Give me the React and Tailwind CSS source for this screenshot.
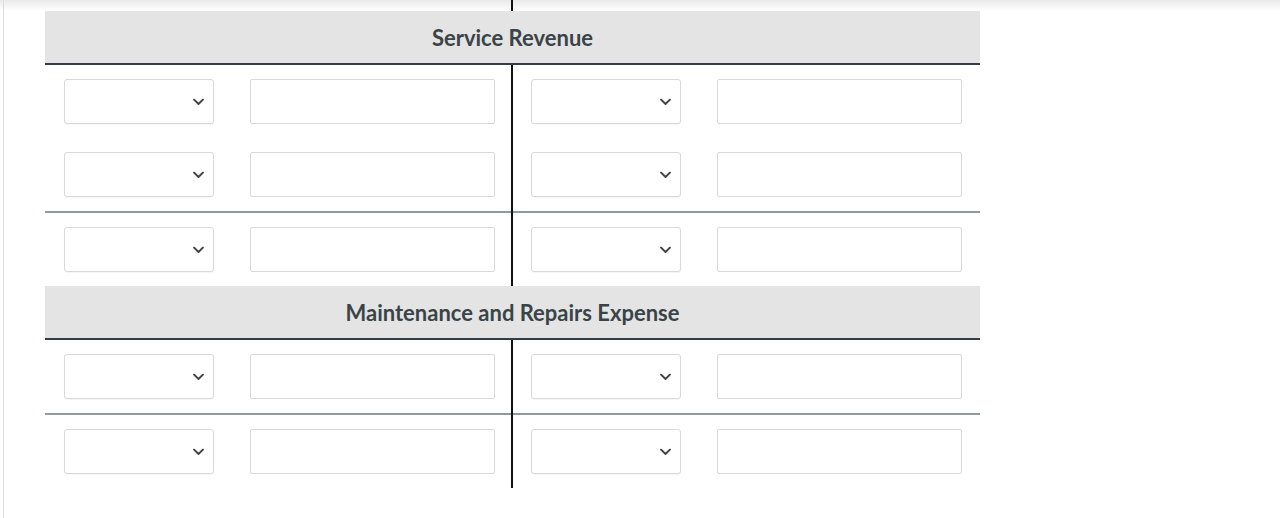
import React from "react";

function Select() {
  return (
    <div className="relative w-[150px] h-[45px] shrink-0 rounded-[3px] border border-[#d9d9d9] bg-white shadow-[0_1px_1px_rgba(0,0,0,0.04)]">
      <svg
        className="absolute right-[9px] top-1/2 -translate-y-1/2"
        width="11"
        height="7"
        viewBox="0 0 11 7"
        fill="none"
      >
        <polyline points="1,1 5.5,5.5 10,1" stroke="#444" strokeWidth="1.8" strokeLinecap="round" strokeLinejoin="round" />
      </svg>
    </div>
  );
}

function TextBox() {
  return <div className="w-[245px] h-[45px] shrink-0 rounded-[2px] border border-[#d9d9d9] bg-white" />;
}

function Row() {
  return (
    <div className="flex h-[73px]">
      <div className="w-[466px] flex items-center gap-[36px] pl-[19px]">
        <Select />
        <TextBox />
      </div>
      <div className="w-[2px] bg-[#111]" />
      <div className="w-[467px] flex items-center gap-[36px] pl-[18px]">
        <Select />
        <TextBox />
      </div>
    </div>
  );
}

function Separator() {
  return (
    <div className="flex h-[2px]">
      <div className="w-[466px] bg-[#8f999e]" />
      <div className="w-[2px] bg-[#111]" />
      <div className="w-[467px] bg-[#8f999e]" />
    </div>
  );
}

function Header({ title }) {
  return (
    <div className="h-[54px] bg-[#e4e4e4] border-b-2 border-[#333e44] flex items-center justify-center">
      <span className="font-['Lato',sans-serif] font-bold text-[22px] text-[#3a4448]">{title}</span>
    </div>
  );
}

export default function App() {
  return (
    <div className="w-full h-[518px] bg-[linear-gradient(to_bottom,#e9e9e9,#ffffff_11px)] pl-[3px]">
      <div className="h-full border-l border-[#dddddd]">
        <div className="ml-[41px] w-[935px] flex flex-col">
          <div className="flex h-[11px]">
            <div className="w-[466px]" />
            <div className="w-[2px] bg-[#111]" />
          </div>
          <Header title="Service Revenue" />
          <Row />
          <Row />
          <Separator />
          <Row />
          <Header title="Maintenance and Repairs Expense" />
          <Row />
          <Separator />
          <Row />
        </div>
      </div>
    </div>
  );
}
